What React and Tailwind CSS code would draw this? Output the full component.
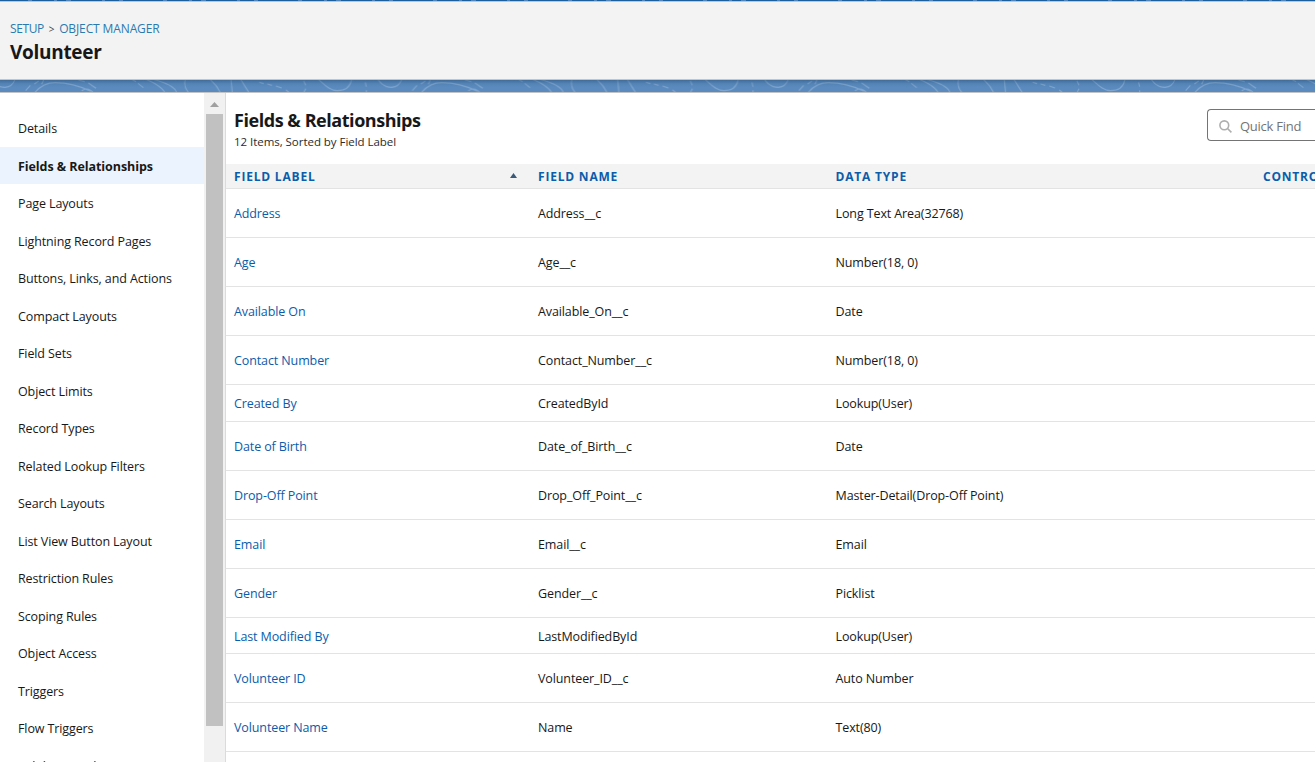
const NAV = [
  'Details', 'Fields & Relationships', 'Page Layouts', 'Lightning Record Pages',
  'Buttons, Links, and Actions', 'Compact Layouts', 'Field Sets', 'Object Limits',
  'Record Types', 'Related Lookup Filters', 'Search Layouts', 'List View Button Layout',
  'Restriction Rules', 'Scoping Rules', 'Object Access', 'Triggers', 'Flow Triggers',
  'Validation Rules',
];

const TALL = 'h-[49px]';
const ROWS = [
  ['Address', 'Address__c', 'Long Text Area(32768)', TALL],
  ['Age', 'Age__c', 'Number(18, 0)', TALL],
  ['Available On', 'Available_On__c', 'Date', TALL],
  ['Contact Number', 'Contact_Number__c', 'Number(18, 0)', TALL],
  ['Created By', 'CreatedById', 'Lookup(User)', 'h-[37px]'],
  ['Date of Birth', 'Date_of_Birth__c', 'Date', TALL],
  ['Drop-Off Point', 'Drop_Off_Point__c', 'Master-Detail(Drop-Off Point)', TALL],
  ['Email', 'Email__c', 'Email', TALL],
  ['Gender', 'Gender__c', 'Picklist', TALL],
  ['Last Modified By', 'LastModifiedById', 'Lookup(User)', 'h-[36px]'],
  ['Volunteer ID', 'Volunteer_ID__c', 'Auto Number', TALL],
  ['Volunteer Name', 'Name', 'Text(80)', TALL],
];

const COLS = 'grid grid-cols-[304px_297.5px_427.5px_300px] pl-2 pt-0.5';

function Topography() {
  return (
    <svg className="block h-3 w-full" aria-hidden="true">
      <defs>
        <pattern id="topo" width="386.67" height="12" patternUnits="userSpaceOnUse">
          <g transform="scale(.3333) translate(0 -30)" fill="none" stroke="#7ea5cf" strokeWidth="3.4">
            <path d="M-25 30Q-10 52 15 52Q38 50 45 28M1135 30Q1150 52 1175 52" />
            <path d="M77 62L91 46M103 42L116 33M125 43L131 30" />
            <path d="M105 67Q130 38 165 38Q220 38 272 64M245 62Q264 50 279 67" />
            <path d="M235 30L254 35M265 39L288 55M395 28L408 35M414 40L430 53" />
            <path d="M438 28Q482 46 495 68M460 28Q524 45 530 68M556 28Q550 50 566 68" />
            <path d="M630 28Q650 45 661 68M693 28L697 68M722 28L747 68" />
            <path d="M778 37L791 41M802 42L816 46M828 48L845 54M858 60L868 68" />
            <path d="M911 32L917 46M917 56L912 67M1096 37L1099 50M1099 61L1099 67" />
            <path d="M955 28C972 42 988 62 1012 62C1040 62 1052 46 1055 28" />
          </g>
        </pattern>
        <linearGradient id="shade" x1="0" y1="0" x2="0" y2="1">
          <stop offset="0" stopColor="#123a60" stopOpacity=".38" />
          <stop offset=".3" stopColor="#123a60" stopOpacity=".1" />
          <stop offset=".6" stopColor="#123a60" stopOpacity="0" />
        </linearGradient>
      </defs>
      <rect width="100%" height="12" fill="#5b8bbe" />
      <rect width="100%" height="12" fill="url(#topo)" />
      <rect width="100%" height="12" fill="url(#shade)" />
    </svg>
  );
}

export default function App() {
  return (
    <div className="flex h-[762px] w-[1315px] flex-col overflow-hidden bg-white font-['Open_Sans','Noto_Sans',sans-serif] text-[12.5px] leading-5 tracking-[-0.11px] whitespace-nowrap text-[#181818]">
      <svg className="block h-px w-full shrink-0" aria-hidden="true">
        <rect width="100%" height="1" fill="#1b5f9f" />
        <path d="M28 .5H1315" stroke="#4f86bd" strokeDasharray="4 22 3 9 5 31 3 14 4 40" />
      </svg>
      <header className="flex h-[79px] shrink-0 flex-col border-y border-[#c4c4c4] bg-[#f3f3f3] pt-[17px] pl-2.5">
        <nav className="flex h-5 items-center text-[12px] tracking-[-0.4px] text-[#2a7ab0]">
          <a>SETUP</a>
          <span className="mx-[5px] text-[10px] text-[#444]">&gt;</span>
          <a className="tracking-[-0.12px]">OBJECT MANAGER</a>
        </nav>
        <h1 className="mt-px text-[19px] leading-6 font-bold tracking-[-0.3px]">Volunteer</h1>
      </header>
      <Topography />
      <div className="flex min-h-0 flex-1 border-t border-[#c4c4c4]">
        <aside className="w-[204px] shrink-0 overflow-hidden pt-[16.5px]">
          {NAV.map((n, i) => (
            <div
              key={n}
              className={
                i === 1
                  ? 'mb-[0.5px] flex h-[37px] items-center bg-[#ebf3fe] pt-[2.5px] pl-[18px] font-bold tracking-[-0.07px]'
                  : 'flex h-[37.5px] items-center pt-0.5 pl-[18px]'
              }
            >
              {n}
            </div>
          ))}
        </aside>
        <div className="flex w-[21px] shrink-0 flex-col bg-[#f1f1f1]">
          <div className="flex h-[21px] items-center justify-center pt-0.5">
            <svg width="9" height="5" viewBox="0 0 9 5"><path d="M0 5L4.5 0L9 5Z" fill="#a0a0a0" /></svg>
          </div>
          <div className="ml-0.5 h-[612px] w-[17px] bg-[#c1c1c1]" />
        </div>
        <main className="min-w-0 flex-1 overflow-hidden border-l border-[#dddbda]">
          <div className="flex h-[71px] justify-between pl-2">
            <div className="pt-[15px]">
              <h2 className="text-[18px] leading-6 font-bold tracking-[-0.45px]">Fields &amp; Relationships</h2>
              <p className="mt-px text-[11.5px] leading-[18px] tracking-[-0.04px] text-[#2b2b2b]">12 Items, Sorted by Field Label</p>
            </div>
            <div className="mt-4 flex h-8 w-[108px] shrink-0 items-center rounded-l border border-r-0 border-[#747474] pt-0.5 pl-[11px] text-[#747474]">
              <svg width="13" height="13" viewBox="0 0 13 13" fill="none" stroke="#aeaeae" strokeWidth="1.6">
                <circle cx="5.3" cy="5.3" r="4.4" />
                <path d="M8.5 8.5L12.4 12.4" />
              </svg>
              <span className="ml-2 text-[13px] tracking-[-0.25px]">Quick Find</span>
            </div>
          </div>
          <div className={`${COLS} h-[25px] items-center border-b border-[#e3e3e3] bg-[#f3f3f3] text-[12px] font-bold tracking-[0.8px] text-[#0b5cab]`}>
            <div className="flex items-center justify-between pr-[21.5px]">
              <span>FIELD LABEL</span>
              <svg className="mb-[3px]" width="7" height="5" viewBox="0 0 7 5"><path d="M0 5L3.5 0L7 5Z" fill="#3b5a78" /></svg>
            </div>
            <span>FIELD NAME</span>
            <span>DATA TYPE</span>
            <span>CONTROLLING FIELD</span>
          </div>
          {ROWS.map(([label, name, type, h]) => (
            <div key={label} className={`${COLS} ${h} items-center border-b border-[#e3e3e3]`}>
              <a className="text-[#0b5cab]">{label}</a>
              <span>{name}</span>
              <span>{type}</span>
            </div>
          ))}
        </main>
      </div>
    </div>
  );
}
